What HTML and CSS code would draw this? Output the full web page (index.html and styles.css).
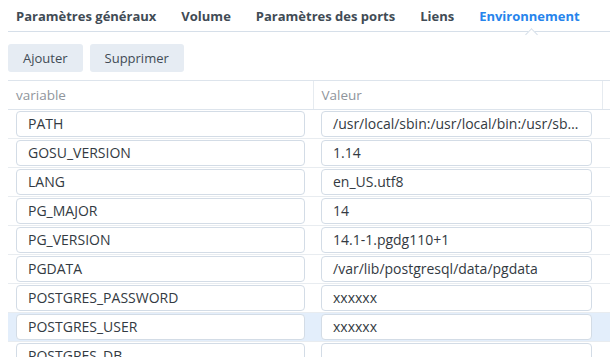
FILE: index.html
```html
<!DOCTYPE html>
<html lang="fr">
<head>
    <meta charset="UTF-8">
    <title>Environnement</title>
    <link rel="stylesheet" href="styles.css">
</head>
<body>

    <!-- Tabs -->
    <div class="tabs">
        <span class="tab">Paramètres généraux</span>
        <span class="tab">Volume</span>
        <span class="tab">Paramètres des ports</span>
        <span class="tab">Liens</span>
        <span class="tab active">Environnement</span>
    </div>

    <!-- Toolbar -->
    <div class="toolbar">
        <button class="btn">Ajouter</button>
        <button class="btn">Supprimer</button>
    </div>

    <!-- Variables grid -->
    <table class="grid">
        <colgroup>
            <col class="col-name">
            <col class="col-value">
            <col class="col-extra">
        </colgroup>
        <thead>
            <tr>
                <th>variable</th>
                <th class="sep">Valeur</th>
                <th class="sep"></th>
            </tr>
        </thead>
        <tbody>
            <tr>
                <td><div class="field">PATH</div></td>
                <td class="value"><div class="field">/usr/local/sbin:/usr/local/bin:/usr/sbin:/usr/bin:/sbin:/bin</div></td>
                <td></td>
            </tr>
            <tr>
                <td><div class="field">GOSU_VERSION</div></td>
                <td class="value"><div class="field">1.14</div></td>
                <td></td>
            </tr>
            <tr>
                <td><div class="field">LANG</div></td>
                <td class="value"><div class="field">en_US.utf8</div></td>
                <td></td>
            </tr>
            <tr>
                <td><div class="field">PG_MAJOR</div></td>
                <td class="value"><div class="field">14</div></td>
                <td></td>
            </tr>
            <tr>
                <td><div class="field">PG_VERSION</div></td>
                <td class="value"><div class="field">14.1-1.pgdg110+1</div></td>
                <td></td>
            </tr>
            <tr>
                <td><div class="field">PGDATA</div></td>
                <td class="value"><div class="field">/var/lib/postgresql/data/pgdata</div></td>
                <td></td>
            </tr>
            <tr>
                <td><div class="field">POSTGRES_PASSWORD</div></td>
                <td class="value"><div class="field">xxxxxx</div></td>
                <td></td>
            </tr>
            <tr class="selected">
                <td><div class="field">POSTGRES_USER</div></td>
                <td class="value"><div class="field">xxxxxx</div></td>
                <td></td>
            </tr>
            <tr>
                <td><div class="field">POSTGRES_DB</div></td>
                <td class="value"><div class="field"></div></td>
                <td></td>
            </tr>
        </tbody>
    </table>

</body>
</html>
```

FILE: styles.css
```css
body {
    font-family: "Open Sans", "Liberation Sans", sans-serif;
    font-size: 13px;
    color: #414b55;
    background: #fff;
    margin: 0;
    padding: 0 0 0 8px;
    overflow: hidden;
}

.tabs {
    position: relative;
    display: flex;
    height: 31px;
    align-items: center;
    border-bottom: 1px solid #d6dfe9;
}

.tab {
    font-weight: bold;
    padding: 0 12px 0 8px;
    margin-right: 5px;
    position: relative;
    white-space: nowrap;
}

.tab.active {
    color: #2684ec;
}

/* small notch under the active tab */
.tab.active::after {
    content: "";
    position: absolute;
    left: 50%;
    bottom: -14px;
    width: 8px;
    height: 8px;
    margin-left: -4px;
    background: #fff;
    border-top: 1px solid #d6dfe9;
    border-left: 1px solid #d6dfe9;
    transform: rotate(45deg);
}

.toolbar {
    display: flex;
    gap: 7px;
    padding: 12px 0 8px;
}

.btn {
    font-family: inherit;
    font-size: 13px;
    color: #414b55;
    height: 28px;
    padding: 0 15px;
    border: none;
    border-radius: 3px;
    background: #e6ecf3;
}

.grid {
    border-collapse: collapse;
    width: 610px;
    table-layout: fixed;
}

.col-name {
    width: 305px;
}

.col-value {
    width: 289px;
}

.col-extra {
    width: 16px;
}

.grid th {
    height: 28px;
    text-align: left;
    font-weight: normal;
    font-size: 13.5px;
    color: #8f959c;
    padding: 0 8px;
    border-top: 1px solid #dde4ec;
    border-bottom: 1px solid #dde4ec;
}

.grid th.sep {
    border-left: 1px solid #e6ebf0;
}

.grid td {
    height: 28px;
    padding: 0 8px;
    border-bottom: 1px solid #e8ecf0;
}

.grid td.value {
    padding-right: 10px;
}

.grid tr.selected td {
    background: #e3eefb;
}

.field {
    height: 24px;
    line-height: 24px;
    padding: 0 11px;
    border: 1px solid #d3dce6;
    border-radius: 4px;
    background: #fff;
    color: #333a42;
    font-size: 14px;
    white-space: nowrap;
    overflow: hidden;
    text-overflow: ellipsis;
}
```
